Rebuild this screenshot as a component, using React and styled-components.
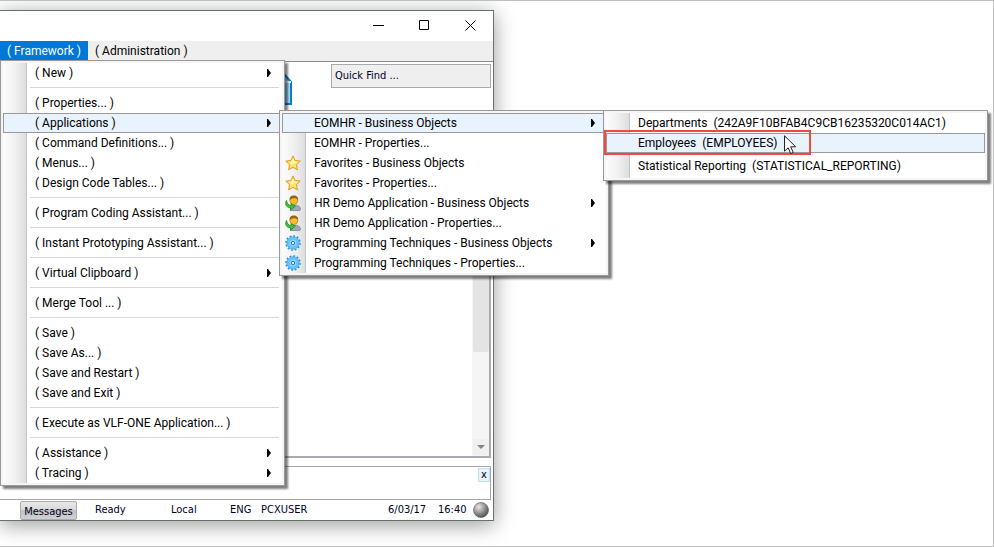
import React from 'react';
import styled, { createGlobalStyle } from 'styled-components';

const GlobalStyle = createGlobalStyle`
  * {
    box-sizing: border-box;
  }

  body {
    margin: 0;
    background: #fff;
    color: #000;
    font-family: Roboto, 'Open Sans', sans-serif;
    font-size: 12px;
  }

  button,
  input {
    margin: 0;
    color: inherit;
    font: inherit;
  }
`;

const Page = styled.div`
  display: grid;
  grid-template-columns: 1fr 1fr;
  column-gap: 5px;
  min-height: 100vh;
  padding: 9px 0 25px;
  border: 1px solid #bfbfbf;
  border-left: none;
  overflow: hidden;
`;

const Window = styled.main`
  position: relative;
  display: flex;
  flex-direction: column;
  background: #fff;
  border: 1px solid #66736b;
  border-left: none;
  box-shadow: 0 4px 20px rgba(0, 0, 0, 0.4);
`;

const TitleBar = styled.header`
  display: flex;
  justify-content: flex-end;
  height: 30px;
`;

const CaptionButton = styled.button`
  display: flex;
  align-items: center;
  justify-content: center;
  width: 46px;
  padding: 0 0 2px;
  background: none;
  border: none;
`;

const MenuBar = styled.nav`
  position: relative;
  display: flex;
  height: 21px;
  background: #efefef;
  border-bottom: 1px solid #8a8a8f;
`;

const MenuBarButton = styled.button`
  height: 19px;
  padding: 0 7px;
  line-height: 18px;
  white-space: nowrap;
  background: ${props => props.$open ? '#0078d7' : 'transparent'};
  color: ${props => props.$open ? '#fff' : '#000'};
  border: none;
`;

const MenuList = styled.ul`
  position: absolute;
  z-index: 1;
  width: ${props => props.$width}px;
  margin: 0;
  padding: 2px;
  list-style: none;
  border: 1px solid #999;
  background:
    linear-gradient(#c5c5c5, #c5c5c5) 23px 0 / 1px 100% no-repeat content-box,
    linear-gradient(to right, #fcfcfc, #f1f1f1 50%, #dedede) 0 0 / 23px 100% no-repeat content-box,
    linear-gradient(#fff, #fff) content-box,
    #f5f5f5;
  box-shadow: 3px 3px 2px rgba(0, 0, 0, 0.5);
`;

const RootMenu = styled(MenuList)`
  top: 19px;
  left: 0;
`;

const SubMenu = styled(MenuList)`
  top: -3px;
  left: calc(100% - 3px);
`;

const MenuRow = styled.li`
  position: relative;
`;

const MenuButton = styled.button`
  display: grid;
  grid-template-columns: 31px 1fr 14px;
  align-items: center;
  width: 100%;
  height: ${props => props.$tall ? 25 : 20}px;
  padding: 0;
  text-align: left;
  white-space: pre;
  background: ${props => props.$active ? '#e8f3fd' : 'transparent'};
  border: 1px solid ${props => props.$active ? '#999' : 'transparent'};
`;

const MenuIcon = styled.span`
  display: flex;
  padding-left: 2px;
`;

const Separator = styled.li`
  height: 10px;
  padding: 4px 3px 0 27px;

  &::before {
    content: '';
    display: block;
    height: 1px;
    background: #d7d7d7;
  }
`;

const Callout = styled.div`
  position: absolute;
  top: -3px;
  left: -2px;
  width: 207px;
  height: 25px;
  border: 2px solid #ee4b43;
  pointer-events: none;
`;

const Pointer = styled.svg`
  position: absolute;
  top: 2px;
  left: 178px;
`;

const Workspace = styled.section`
  display: flex;
  flex: 1;
  flex-direction: column;
  padding-right: 2px;
`;

const Toolbar = styled.div`
  display: flex;
  justify-content: flex-end;
  gap: 39px;
  height: 48px;
  padding-top: 2px;
`;

const QuickFind = styled.input`
  width: 160px;
  height: 24px;
  padding: 0 3px 2px;
  background: #efefef;
  border: 1px solid #a9a9b0;
  border-radius: 0;
  font-family: 'DejaVu Sans Condensed', 'DejaVu Sans', sans-serif;
  font-size: 11px;

  &::placeholder {
    color: #00002a;
    opacity: 1;
  }
`;

const ListPane = styled.div`
  display: flex;
  flex: 1;
  justify-content: flex-end;
  margin-bottom: 8px;
  border: 2px solid #aaaab0;
  border-left: none;
`;

const ScrollTrack = styled.div`
  display: flex;
  flex-direction: column;
  justify-content: space-between;
  width: 17px;
  padding: 0 0 1px 1px;
  background: #f5f5f5;
`;

const ScrollThumb = styled.div`
  height: 70%;
  background: #e4e4e4;
  border-radius: 2px;
`;

const ScrollButton = styled.button`
  display: flex;
  align-items: center;
  justify-content: center;
  height: 16px;
  padding: 0;
  background: #f0f0f0;
  border: none;
`;

const MessagePane = styled.div`
  display: flex;
  align-items: flex-start;
  justify-content: flex-end;
  height: 34px;
  margin-right: 2px;
  padding-top: 1px;
  border: 1px solid #a5a5ab;
  border-left: none;
`;

const ClosePane = styled.button`
  width: 12px;
  height: 14px;
  padding: 0;
  line-height: 12px;
  background: #e5f3fd;
  border: 1px solid #bfe0f7;
  font-family: 'DejaVu Sans Condensed', 'DejaVu Sans', sans-serif;
  font-size: 11px;
`;

const StatusBar = styled.footer`
  display: flex;
  align-items: center;
  height: 20px;
  padding: 0 4px 0 20px;
  color: #00001c;
  font-family: 'DejaVu Sans Condensed', 'DejaVu Sans', sans-serif;
  font-size: 11px;
`;

const MessagesButton = styled.button`
  width: 57px;
  height: 19px;
  margin-right: 18px;
  padding: 2px 0 0;
  line-height: 15px;
  background: linear-gradient(#e9e9e9, #d8d8d8 45%, #c2c2c2 50%, #d0d0d0);
  border: 1px solid #acacac;
  border-radius: 2px;
`;

const StatusText = styled.span`
  flex: ${props => props.$width ? `0 0 ${props.$width}px` : '1'};
  padding-bottom: 2px;
  white-space: nowrap;
`;

const SubArrow = () => (
  <svg width="5" height="8" viewBox="0 0 5 8">
    <path d="M0 0h1l3 4-3 4H0z" fill="#000" />
  </svg>
);

const StarIcon = () => (
  <svg width="16" height="16" viewBox="0 0 16 16">
    <path
      d="M8 .9l2.1 4.6 5.1.6-3.7 3.5.9 5.2L8 12.4l-4.4 2.4.9-5.2L.8 6.1l5.1-.6z"
      fill="#ffe36b"
      stroke="#dc9a25"
      strokeLinejoin="round"
    />
    <path d="M8 3.4l1.3 3 3.2.5L6 9.6 5.6 6.9l1-.5z" fill="#fff6b8" />
  </svg>
);

const PersonIcon = () => (
  <svg width="16" height="16" viewBox="0 0 16 16">
    <path d="M5.5 15.5c-.5-4 1.5-5.5 4-5.5s6 1 6 4.500c0 1-1 1-2 1z" fill="#a3a8b8" stroke="#73788a" strokeWidth=".7" />
    <circle cx="8.8" cy="5.5" r="4" fill="#f7bd2e" stroke="#b67a18" strokeWidth=".7" />
    <path d="M4.6 5C4.300 1.800 6.300.4 8.900.4s4.600 1.600 4.200 4.600c-1.700-2-5-2.400-8.500 0z" fill="#9a6512" />
    <path d="M1.600 5.500C-.4 9 1 12.500 5.500 12.800v2.400l4.800-4-4.300-2.400v1.800C3.500 10.500 2 8.500 1.600 5.500z" fill="#3fc435" stroke="#168a1b" strokeWidth=".8" strokeLinejoin="round" />
  </svg>
);

const GearIcon = () => (
  <svg width="16" height="16" viewBox="0 0 16 16">
    <circle cx="8" cy="8" r="7" fill="none" stroke="#2590d8" strokeWidth="1.6" strokeDasharray="1.85 1.815" />
    <circle cx="8" cy="8" r="6.1" fill="#69c3fb" stroke="#3ba0e6" strokeWidth=".8" />
    <circle cx="8" cy="8" r="3.2" fill="#8ed4ff" />
    <circle cx="8" cy="8" r="1.7" fill="#fff" stroke="#1d7fc8" />
  </svg>
);

const PackageIcon = () => (
  <svg width="32" height="42" viewBox="0 0 32 42">
    <defs>
      <linearGradient id="package" x1="0" x2="1">
        <stop offset="0" stopColor="#8ccdf2" />
        <stop offset=".78" stopColor="#6cc0f0" />
        <stop offset="1" stopColor="#c4e8fb" />
      </linearGradient>
    </defs>
    <path d="M1 17L16 4l8 6 7 8v22H1z" fill="url(#package)" stroke="#0a7fd0" strokeWidth="2" />
    <path d="M23 9l2 9h6" fill="none" stroke="#e2f5ff" strokeWidth="2" />
  </svg>
);

const icons = {
  star: <StarIcon />,
  person: <PersonIcon />,
  gear: <GearIcon />,
};

const viewItems = [
  { label: 'Departments  (242A9F10BFAB4C9CB16235320C014AC1)' },
  { label: 'Employees  (EMPLOYEES)', active: true, marked: true },
  { label: 'Statistical Reporting  (STATISTICAL_REPORTING)', tall: true },
];

const applicationItems = [
  { label: 'EOMHR - Business Objects', arrow: true, active: true, items: viewItems, menuWidth: 385 },
  { label: 'EOMHR - Properties...' },
  { label: 'Favorites - Business Objects', icon: 'star' },
  { label: 'Favorites - Properties...', icon: 'star' },
  { label: 'HR Demo Application - Business Objects', icon: 'person', arrow: true },
  { label: 'HR Demo Application - Properties...', icon: 'person' },
  { label: 'Programming Techniques - Business Objects', icon: 'gear', arrow: true },
  { label: 'Programming Techniques - Properties...', icon: 'gear' },
];

const frameworkItems = [
  { label: '( New )', arrow: true },
  null,
  { label: '( Properties... )' },
  { label: '( Applications )', arrow: true, active: true, items: applicationItems, menuWidth: 330 },
  { label: '( Command Definitions... )' },
  { label: '( Menus... )' },
  { label: '( Design Code Tables... )' },
  null,
  { label: '( Program Coding Assistant... )' },
  null,
  { label: '( Instant Prototyping Assistant... )' },
  null,
  { label: '( Virtual Clipboard )', arrow: true },
  null,
  { label: '( Merge Tool ... )' },
  null,
  { label: '( Save )' },
  { label: '( Save As... )' },
  { label: '( Save and Restart )' },
  { label: '( Save and Exit )' },
  null,
  { label: '( Execute as VLF-ONE Application... )' },
  null,
  { label: '( Assistance )', arrow: true },
  { label: '( Tracing )', arrow: true },
];

const MenuItems = ({ items }) => items.map((item, index) => {
  if (!item) {
    return <Separator key={index} role="separator" />;
  }

  return (
    <MenuRow key={item.label} role="none">
      <MenuButton role="menuitem" $active={item.active} $tall={item.tall}>
        <MenuIcon>{icons[item.icon]}</MenuIcon>
        {item.label}
        {item.arrow && <SubArrow />}
      </MenuButton>
      {item.items && (
        <SubMenu role="menu" $width={item.menuWidth}>
          <MenuItems items={item.items} />
        </SubMenu>
      )}
      {item.marked && (
        <>
          <Callout />
          <Pointer width="13" height="19" viewBox="0 0 13 19">
            <path d="M.5.8v15.4l3.7-3.4 2.5 5.7 2.5-1.100-2.500-5.600h5z" fill="#fff" stroke="#222" />
          </Pointer>
        </>
      )}
    </MenuRow>
  );
});

const App = () => {
  return (
    <>
      <GlobalStyle />
      <Page>
        <Window>
          <TitleBar>
            <CaptionButton aria-label="Minimize">
              <svg width="11" height="11"><path d="M0 5.5h11" stroke="#000" /></svg>
            </CaptionButton>
            <CaptionButton aria-label="Maximize">
              <svg width="11" height="11"><path d="M.5.5h9v9h-9z" fill="none" stroke="#000" /></svg>
            </CaptionButton>
            <CaptionButton aria-label="Close">
              <svg width="11" height="11"><path d="M.5.5l10 10M10.5.5l-10 10" stroke="#000" /></svg>
            </CaptionButton>
          </TitleBar>

          <MenuBar>
            <MenuBarButton $open>( Framework )</MenuBarButton>
            <MenuBarButton>( Administration )</MenuBarButton>
            <RootMenu role="menu" $width={285}>
              <MenuItems items={frameworkItems} />
            </RootMenu>
          </MenuBar>

          <Workspace>
            <Toolbar>
              <PackageIcon />
              <QuickFind type="text" aria-label="Quick Find" placeholder="Quick Find ..." />
            </Toolbar>
            <ListPane>
              <ScrollTrack>
                <ScrollThumb />
                <ScrollButton aria-label="Scroll down">
                  <svg width="8" height="4"><path d="M0 0h8L4 4z" fill="#858585" /></svg>
                </ScrollButton>
              </ScrollTrack>
            </ListPane>
          </Workspace>

          <MessagePane>
            <ClosePane aria-label="Close messages">x</ClosePane>
          </MessagePane>

          <StatusBar>
            <MessagesButton>Messages</MessagesButton>
            <StatusText $width={76}>Ready</StatusText>
            <StatusText $width={59}>Local</StatusText>
            <StatusText $width={31}>ENG</StatusText>
            <StatusText>PCXUSER</StatusText>
            <StatusText $width={50}>6/03/17</StatusText>
            <StatusText $width={35}>16:40</StatusText>
            <svg width="16" height="16" viewBox="0 0 16 16">
              <defs>
                <radialGradient id="ball" cx=".35" cy=".3" r=".75">
                  <stop offset="0" stopColor="#e6e6e6" />
                  <stop offset=".5" stopColor="#9a9a9a" />
                  <stop offset="1" stopColor="#4c4c4c" />
                </radialGradient>
              </defs>
              <circle cx="8" cy="8" r="7.5" fill="url(#ball)" stroke="#555" strokeWidth=".6" />
            </svg>
          </StatusBar>
        </Window>
      </Page>
    </>
  );
};

export default App;
